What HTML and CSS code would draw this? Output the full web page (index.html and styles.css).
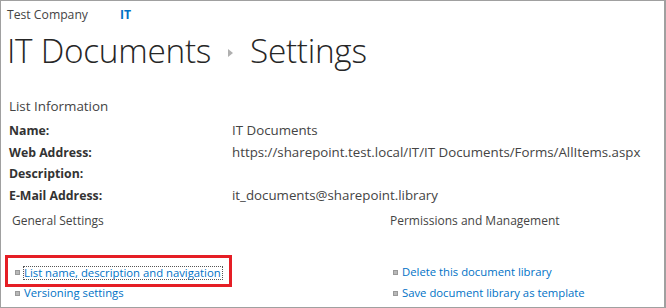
FILE: index.html
```html
<!DOCTYPE html>
<html>
<head>
<meta charset="utf-8">
<link rel="stylesheet" href="styles.css">
</head>
<body>
<div class="frame">
  <div class="topnav">
    <span class="site">Test Company</span>
    <span class="current">IT</span>
  </div>
  <h1 class="title">
    <span>IT Documents</span>
    <span class="arrow"></span>
    <span>Settings</span>
  </h1>
  <div class="listinfo">
    <div class="section-head">List Information</div>
    <div class="props">
      <div class="label">Name:</div><div class="value">IT Documents</div>
      <div class="label">Web Address:</div><div class="value">https://sharepoint.test.local/IT/IT Documents/Forms/AllItems.aspx</div>
      <div class="label">Description:</div><div class="value"></div>
      <div class="label">E-Mail Address:</div><div class="value">it_documents@sharepoint.library</div>
    </div>
  </div>
  <div class="columns">
    <div class="col col-left">
      <div class="col-head">General Settings</div>
      <ul class="links">
        <li class="highlight"><span class="bullet"></span><a class="focused">List name, description and navigation</a></li>
        <li><span class="bullet"></span><a>Versioning settings</a></li>
      </ul>
    </div>
    <div class="col col-right">
      <div class="col-head">Permissions and Management</div>
      <ul class="links">
        <li><span class="bullet"></span><a>Delete this document library</a></li>
        <li><span class="bullet"></span><a>Save document library as template</a></li>
      </ul>
    </div>
  </div>
</div>
</body>
</html>
```
FILE: styles.css
```css
*, *::before, *::after { box-sizing: border-box; }
html, body { margin: 0; padding: 0; background: #fff; }
body {
  font-family: "Segoe UI", "Open Sans", "Noto Sans", sans-serif;
  color: #444;
  font-size: 12.5px;
}
.frame {
  width: 666px;
  height: 308px;
  border: 1px solid #a0a0a0;
  border-right-width: 2px;
  overflow: hidden;
  padding: 5px 0 0 6px;
}
.topnav {
  display: flex;
  gap: 32px;
  height: 18px;
  line-height: 18px;
  font-size: 12.2px;
  color: #444;
}
.topnav .current { color: #0072c6; font-weight: bold; }
.title {
  margin: 4px 0 0 0;
  font-weight: 300;
  font-size: 33.4px;
  line-height: 44px;
  color: #262626;
  display: flex;
  align-items: center;
  gap: 14px;
  letter-spacing: -0.3px;
}
.arrow {
  width: 0; height: 0;
  border-left: 5px solid #b0b0b0;
  border-top: 4px solid transparent;
  border-bottom: 4px solid transparent;
  margin: 6px 3px 0 3px;
}
.listinfo { margin-top: 24px; padding-left: 2px; }
.section-head { height: 21px; line-height: 21px; font-size: 13.4px; }
.props {
  display: grid;
  grid-template-columns: 223px 1fr;
  grid-auto-rows: 21.7px;
  line-height: 21.7px;
  margin-top: 3px;
}
.label { font-weight: bold; color: #333; font-size: 12.3px; }
.value { color: #444; font-size: 13.3px; }
.columns { display: flex; margin-top: 3px; }
.col-head { height: 22px; line-height: 22px; font-size: 12px; }
.col-left { width: 383px; padding-left: 5px; }
.links { list-style: none; margin: 30.6px 0 0 0; padding: 0; }
.links li {
  display: flex;
  align-items: center;
  height: 20.5px;
  line-height: 20.5px;
  font-size: 11.3px;
}
.bullet {
  width: 5px; height: 5px;
  background: #b8b8b8;
  border: 1px solid #999;
  margin: 0 4px 0 3px;
  flex: none;
}
.links a { color: #0072c6; }
.col-left .links li:first-child { position: relative; }
.highlight::after {
  content: "";
  position: absolute;
  left: -7px; top: -7px;
  width: 227px; height: 32px;
  border: 3px solid #e51e25;
}
.focused {
  display: block;
  outline: 1px dotted #555;
  outline-offset: 0;
  line-height: 12px;
  padding-right: 1px;
}
```
